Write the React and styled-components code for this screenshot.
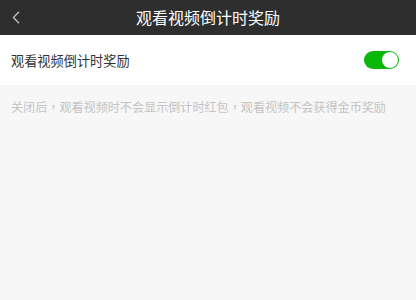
import React, { useState } from "react";
import styled, { createGlobalStyle } from "styled-components";

const Global = createGlobalStyle`
  html, body { margin: 0; padding: 0; background: #f7f7f7; }
  body { font-family: "Noto Sans CJK SC", "Noto Sans", sans-serif; }
`;

const Page = styled.div`
  width: 416px;
  height: 300px;
  background: #f7f7f7;
  display: flex;
  flex-direction: column;
`;

const Header = styled.header`
  height: 35px;
  background: #2e2e2e;
  display: grid;
  grid-template-columns: 40px 1fr 40px;
  align-items: center;
`;

const Back = styled.button`
  border: 0;
  background: none;
  padding: 0 0 0 12px;
  height: 35px;
  display: flex;
  align-items: center;
`;

const Title = styled.h1`
  margin: 0;
  color: #fff;
  font-size: 16px;
  font-weight: 400;
  text-align: center;
  line-height: 35px;
`;

const Row = styled.div`
  height: 50px;
  background: #fff;
  display: flex;
  align-items: center;
  justify-content: space-between;
  padding: 0 17px 0 11px;
`;

const Label = styled.span`
  color: #333;
  font-size: 13.2px;
`;

const Toggle = styled.button`
  width: 35px;
  height: 18px;
  border-radius: 9px;
  border: 0;
  padding: 0;
  background: ${(p) => (p.$on ? "#0ab80a" : "#e5e5e5")};
  display: flex;
  align-items: center;
  justify-content: ${(p) => (p.$on ? "flex-end" : "flex-start")};
  cursor: pointer;
`;

const Knob = styled.span`
  width: 16px;
  height: 16px;
  border-radius: 50%;
  background: #fff;
  margin: 0 1px;
  box-shadow: 0 0 0 0.5px rgba(0, 0, 0, 0.08);
`;

const Note = styled.p`
  margin: 0;
  padding: 14px 11px;
  color: #c4c4c4;
  font-family: "Noto Sans CJK TC", "Noto Sans CJK SC", sans-serif;
  font-size: 12.1px;
  line-height: 16px;
`;

export default function App() {
  const [on, setOn] = useState(true);
  return (
    <Page>
      <Global />
      <Header>
        <Back aria-label="back">
          <svg width="8" height="13" viewBox="0 0 8 13">
            <path d="M7 0.8 L1.5 6.5 L7 12.2" fill="none" stroke="#bdbdbd" strokeWidth="1.4" />
          </svg>
        </Back>
        <Title>观看视频倒计时奖励</Title>
        <span />
      </Header>
      <Row>
        <Label>观看视频倒计时奖励</Label>
        <Toggle $on={on} onClick={() => setOn(!on)}>
          <Knob />
        </Toggle>
      </Row>
      <Note>关闭后，观看视频时不会显示倒计时红包，观看视频不会获得金币奖励</Note>
    </Page>
  );
}
